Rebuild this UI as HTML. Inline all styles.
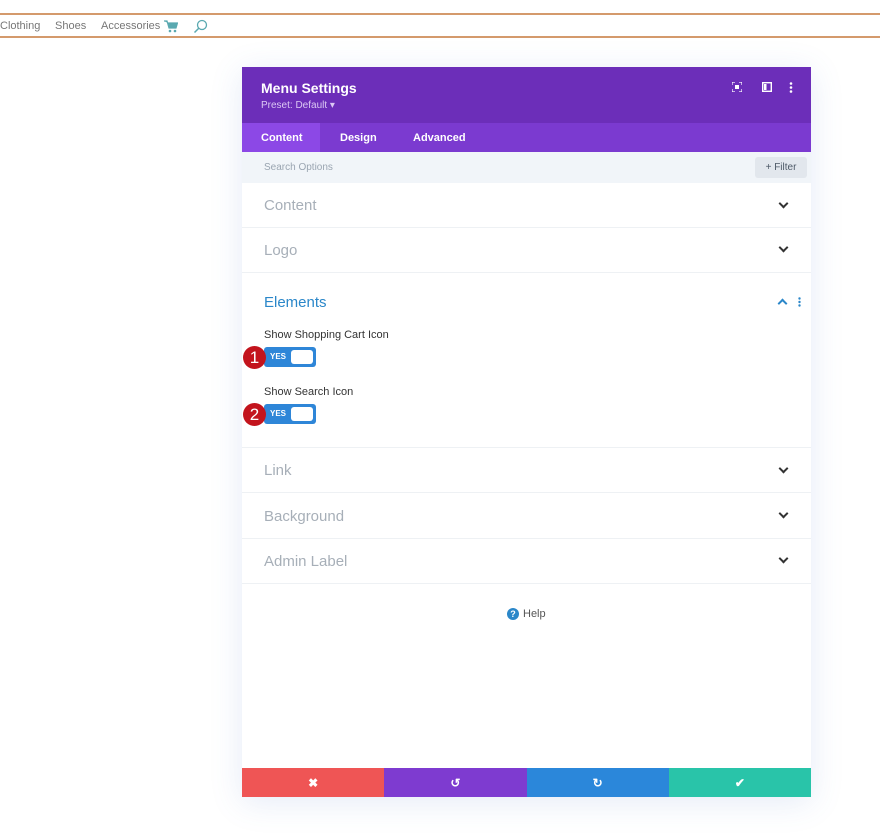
<!DOCTYPE html>
<html><head><style>
*{margin:0;padding:0;box-sizing:border-box}
body{width:880px;height:839px;background:#fff;font-family:"Liberation Sans",sans-serif;position:relative;overflow:hidden}
.nav{position:absolute;left:0;top:13px;width:880px;height:25px;border-top:2px solid #d49a6c;border-bottom:2px solid #d49a6c}
.nav span{position:absolute;top:5px;font-size:11px;color:#777}
.panel{position:absolute;left:242px;top:67px;width:569px;height:730px;background:#fff;box-shadow:0 5px 30px rgba(80,120,200,.15)}
.hd{height:56px;background:#6c2eb9;position:relative;color:#fff}
.hd .t{position:absolute;left:19px;top:13px;font-size:14px;font-weight:bold}
.hd .p{position:absolute;left:19px;top:33px;font-size:10px;color:#dcc8f4}
.tabs{height:29px;background:#7b3ad0;position:relative}
.tabs span{position:absolute;top:9px;font-size:11px;font-weight:bold;color:#fff}
.act{position:absolute;left:0;top:0;width:78px;height:29px;background:#8c48e6}
.search{height:31px;background:#f1f5f9;position:relative}
.search span{position:absolute;left:22px;top:10px;font-size:10px;color:#9aa5b1}
.filter{position:absolute;right:4px;top:5px;width:52px;height:21px;background:#e2e7ed;border-radius:3px;font-size:10px;color:#4c5866;text-align:center;line-height:21px}
.sec{position:absolute;left:0;width:569px;border-bottom:1px solid #eef1f4}
.sec span{position:absolute;left:22px;font-size:15px;color:#a7afb8}
.chev{position:absolute;right:24px;width:7px;height:7px;border-right:2px solid #333;border-bottom:2px solid #333;transform:rotate(45deg)}
.lbl{position:absolute;left:22px;font-size:11px;color:#333}
.tog{position:absolute;left:22px;width:52px;height:20px;background:#2e86d8;border-radius:3px}
.tog b{position:absolute;left:6px;top:5px;font-size:8px;color:#fff}
.tog i{position:absolute;right:3px;top:3px;width:22px;height:14px;background:#fff;border-radius:3px}
.num{position:absolute;left:1px;width:23px;height:23px;border-radius:50%;background:#c3141d;color:#fff;font-size:17px;text-align:center;line-height:23px}
.ft{position:absolute;left:0;top:701px;height:29px;width:569px;display:flex}
.ft div{flex:1;color:#fff;text-align:center;line-height:30px;font-size:12px;font-weight:bold}
</style></head><body>
<div class="nav">
<span style="left:0">Clothing</span><span style="left:55px">Shoes</span><span style="left:101px">Accessories</span>
<svg style="position:absolute;left:164px;top:5px" width="14" height="13" viewBox="0 0 14 13"><path d="M0 1h3l2 7h7l1.5-5H4" fill="#5aa9b0" stroke="#5aa9b0" stroke-width="1.2"/><circle cx="6" cy="11" r="1.3" fill="#5aa9b0"/><circle cx="11" cy="11" r="1.3" fill="#5aa9b0"/></svg>
<svg style="position:absolute;left:193px;top:4px" width="15" height="15" viewBox="0 0 15 15"><circle cx="9" cy="6" r="4.5" fill="none" stroke="#5aa9b0" stroke-width="1.3"/><path d="M6 9l-4.5 4.5" stroke="#5aa9b0" stroke-width="1.5"/></svg>
</div>
<div class="panel">
<div class="hd"><div class="t">Menu Settings</div><div class="p">Preset: Default ▾</div>
<svg style="position:absolute;left:490px;top:15px" width="10" height="10" viewBox="0 0 10 10"><path d="M0 3V0h3M7 0h3v3M10 7v3H7M3 10H0V7" fill="none" stroke="#fff" stroke-width="1.2"/><rect x="3" y="3" width="4" height="4" fill="#fff"/></svg>
<svg style="position:absolute;left:520px;top:15px" width="10" height="10" viewBox="0 0 10 10"><rect x="0.7" y="0.7" width="8.6" height="8.6" fill="none" stroke="#fff" stroke-width="1.4"/><rect x="2" y="2" width="2.5" height="6" fill="#fff"/></svg>
<svg style="position:absolute;left:547px;top:15px" width="4" height="11"><circle cx="2" cy="1.5" r="1.3" fill="#fff"/><circle cx="2" cy="5.5" r="1.3" fill="#fff"/><circle cx="2" cy="9.5" r="1.3" fill="#fff"/></svg>
</div>
<div class="tabs"><div class="act"></div><span style="left:19px">Content</span><span style="left:98px">Design</span><span style="left:171px">Advanced</span></div>
<div class="search"><span>Search Options</span><div class="filter">+ Filter</div></div>
<div class="sec" style="top:116px;height:45px"><span style="top:14px">Content</span><div class="chev" style="top:17px"></div></div>
<div class="sec" style="top:161px;height:45px"><span style="top:14px">Logo</span><div class="chev" style="top:16px"></div></div>
<div class="sec" style="top:206px;height:175px"><span style="top:21px;color:#2b87c9">Elements</span>
<div style="position:absolute;right:25px;top:27px;width:7px;height:7px;border-left:2px solid #2b87c9;border-top:2px solid #2b87c9;transform:rotate(45deg)"></div>
<svg style="position:absolute;right:10px;top:24px" width="3" height="10"><circle cx="1.5" cy="1.5" r="1.2" fill="#2b87c9"/><circle cx="1.5" cy="5" r="1.2" fill="#2b87c9"/><circle cx="1.5" cy="8.5" r="1.2" fill="#2b87c9"/></svg>
<div class="lbl" style="top:56px">Show Shopping Cart Icon</div>
<div class="tog" style="top:74px"><b>YES</b><i></i></div><div class="num" style="top:73px">1</div>
<div class="lbl" style="top:113px">Show Search Icon</div>
<div class="tog" style="top:131px"><b>YES</b><i></i></div><div class="num" style="top:130px">2</div>
</div>
<div class="sec" style="top:381px;height:45px"><span style="top:14px">Link</span><div class="chev" style="top:17px"></div></div>
<div class="sec" style="top:426px;height:46px"><span style="top:15px">Background</span><div class="chev" style="top:17px"></div></div>
<div class="sec" style="top:472px;height:45px"><span style="top:14px">Admin Label</span><div class="chev" style="top:16px"></div></div>
<div style="position:absolute;left:265px;top:541px;font-size:11px;color:#555"><span style="display:inline-block;width:12px;height:12px;border-radius:50%;background:#2b87c9;color:#fff;font-size:9px;font-weight:bold;text-align:center;line-height:12px;margin-right:4px">?</span>Help</div>
<div class="ft"><div style="background:#ef5555">✖</div><div style="background:#7e3bd0">↺</div><div style="background:#2b87da">↻</div><div style="background:#29c4a9">✔</div></div>
</div>
</body></html>
